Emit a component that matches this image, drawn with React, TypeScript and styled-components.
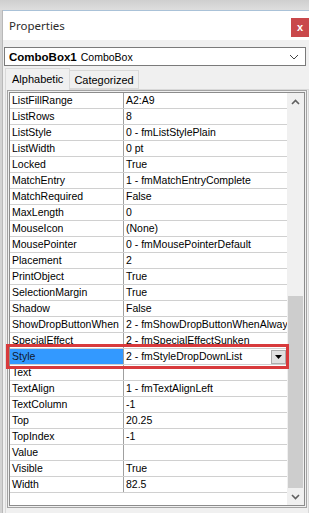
import styled, { createGlobalStyle } from "styled-components";

const GlobalStyle = createGlobalStyle`
  * { box-sizing: border-box; }
  html, body { margin: 0; padding: 0; background: #d8d8d8; }
  body { width: 309px; height: 513px; overflow: hidden; }
`;

type Prop = { name: string; value: string };

const props: Prop[] = [
  { name: "ListFillRange", value: "A2:A9" },
  { name: "ListRows", value: "8" },
  { name: "ListStyle", value: "0 - fmListStylePlain" },
  { name: "ListWidth", value: "0 pt" },
  { name: "Locked", value: "True" },
  { name: "MatchEntry", value: "1 - fmMatchEntryComplete" },
  { name: "MatchRequired", value: "False" },
  { name: "MaxLength", value: "0" },
  { name: "MouseIcon", value: "(None)" },
  { name: "MousePointer", value: "0 - fmMousePointerDefault" },
  { name: "Placement", value: "2" },
  { name: "PrintObject", value: "True" },
  { name: "SelectionMargin", value: "True" },
  { name: "Shadow", value: "False" },
  { name: "ShowDropButtonWhen", value: "2 - fmShowDropButtonWhenAlways" },
  { name: "SpecialEffect", value: "2 - fmSpecialEffectSunken" },
  { name: "Style", value: "2 - fmStyleDropDownList" },
  { name: "Text", value: "" },
  { name: "TextAlign", value: "1 - fmTextAlignLeft" },
  { name: "TextColumn", value: "-1" },
  { name: "Top", value: "20.25" },
  { name: "TopIndex", value: "-1" },
  { name: "Value", value: "" },
  { name: "Visible", value: "True" },
  { name: "Width", value: "82.5" },
];

const Page = styled.div`
  width: 309px;
  height: 513px;
  display: flex;
  flex-direction: column;
  font-family: "Liberation Sans", Arial, sans-serif;
`;

const TopBand = styled.div`
  height: 10px;
  background: linear-gradient(#cfcfcf, #dedede);
`;

const Body = styled.div`
  flex: 1;
  display: flex;
`;

const LeftStrip = styled.div`
  width: 3px;
  background: #d3d3d3;
  border-right: 1px solid #b9b9b9;
`;

const Window = styled.div`
  flex: 1;
  display: flex;
  flex-direction: column;
  background: #f0f0f0;
  border-top: 1px solid #aac2d8;
`;

const TitleBar = styled.div`
  height: 29px;
  background: #ffffff;
  display: flex;
  align-items: flex-start;
  justify-content: space-between;
`;

const Title = styled.span`
  font-family: "Noto Sans", sans-serif;
  font-size: 11.5px;
  color: #2b2b2b;
  margin: 7px 0 0 6px;
`;

const CloseBtn = styled.div`
  width: 18px;
  height: 19px;
  margin-top: 7px;
  background: #c9484b;
  color: #ffffff;
  font-size: 11px;
  font-weight: bold;
  display: flex;
  align-items: center;
  justify-content: center;
  padding-bottom: 2px;
`;

const Panel = styled.div`
  flex: 1;
  display: flex;
  flex-direction: column;
  padding: 7px 0 0 1px;
`;

const ObjectCombo = styled.div`
  width: 302px;
  height: 19px;
  background: #ffffff;
  border: 1px solid #7a7a7a;
  display: flex;
  align-items: center;
  padding: 0 6px 0 4px;
  font-size: 10.5px;
  color: #000;
  gap: 4px;
  b {
    font-size: 11.5px;
  }
`;

const ComboChevron = styled.svg`
  margin-left: auto;
`;

const Tabs = styled.div`
  display: flex;
  align-items: flex-start;
  margin: 2px 0 0 1px;
  height: 21px;
  position: relative;
  z-index: 1;
`;

const Tab = styled.div<{ $active?: boolean }>`
  font-size: 11px;
  color: #000;
  border: 1px solid #d9d9d9;
  border-bottom: ${(p) => (p.$active ? "none" : "1px solid #d9d9d9")};
  background: ${(p) => (p.$active ? "#f0f0f0" : "#f0f0f0")};
  height: ${(p) => (p.$active ? "22px" : "19px")};
  margin-top: ${(p) => (p.$active ? "0" : "2px")};
  margin-left: ${(p) => (p.$active ? "0" : "-1px")};
  padding: ${(p) => (p.$active ? "4px 6px 0 6px" : "3px 4px 0 4px")};
`;

const TabPage = styled.div`
  margin-left: 1px;
  width: 304px;
  border: 1px solid #d9d9d9;
  border-bottom: none;
  padding: 0 1px;
  flex: 1;
`;

const GridFrame = styled.div`
  position: relative;
  height: 418px;
  border: 1px solid #a3a3a3;
  padding: 1px;
  background: #f0f0f0;
`;

const GridInner = styled.div`
  height: 100%;
  border: 1px solid #8c8c8c;
  background: #ffffff;
  display: flex;
`;

const Rows = styled.div`
  flex: 1;
  overflow: hidden;
  font-size: 10.5px;
  color: #000;
`;

const Row = styled.div`
  display: flex;
  height: 16px;
  border-bottom: 1px solid #d0d0d0;
`;

const NameCell = styled.div<{ $selected?: boolean }>`
  width: 114px;
  flex-shrink: 0;
  border-right: 1px solid #a0a0a0;
  padding: 1px 0 0 2px;
  white-space: nowrap;
  overflow: hidden;
  background: ${(p) => (p.$selected ? "#3399ff" : "transparent")};
  color: ${(p) => (p.$selected ? "#10182e" : "#000")};
`;

const ValueCell = styled.div`
  flex: 1;
  display: flex;
  align-items: flex-start;
  padding: 1px 0 0 2px;
  white-space: nowrap;
  overflow: hidden;
`;

const DropBtn = styled.div`
  margin-left: auto;
  margin-right: 1px;
  width: 15px;
  height: 14px;
  flex-shrink: 0;
  background: #e1e1e1;
  border: 1px solid #adadad;
  display: flex;
  align-items: center;
  justify-content: center;
`;

const Scrollbar = styled.div`
  width: 17px;
  flex-shrink: 0;
  background: #f0f0f0;
  display: flex;
  flex-direction: column;
`;

const ArrowBtn = styled.div`
  height: 17px;
  display: flex;
  align-items: center;
  justify-content: center;
`;

const Track = styled.div`
  flex: 1;
  display: flex;
  flex-direction: column;
  justify-content: flex-end;
`;

const Thumb = styled.div`
  margin: 0 1px;
  background: #cdcdcd;
`;

const Highlight = styled.div`
  position: absolute;
  left: -2px;
  top: 253px;
  width: 283px;
  height: 25px;
  border: 3px solid #d83a3c;
  pointer-events: none;
`;

const Chevron = ({ up }: { up?: boolean }) => (
  <svg width="9" height="6" viewBox="0 0 9 6">
    <path
      d={up ? "M1 5 L4.5 1.5 L8 5" : "M1 1 L4.5 4.5 L8 1"}
      fill="none"
      stroke="#606060"
      strokeWidth="1.6"
    />
  </svg>
);

export default function App() {
  return (
    <Page>
      <GlobalStyle />
      <TopBand />
      <Body>
        <LeftStrip />
        <Window>
          <TitleBar>
            <Title>Properties</Title>
            <CloseBtn>x</CloseBtn>
          </TitleBar>
          <Panel>
            <ObjectCombo>
              <b>ComboBox1</b>
              <span>ComboBox</span>
              <ComboChevron width="10" height="6" viewBox="0 0 10 6">
                <path d="M1 1 L5 5 L9 1" fill="none" stroke="#444" strokeWidth="1" />
              </ComboChevron>
            </ObjectCombo>
            <Tabs>
              <Tab $active>Alphabetic</Tab>
              <Tab>Categorized</Tab>
            </Tabs>
            <TabPage>
              <GridFrame>
                <GridInner>
                  <Rows>
                    {props.map((p) => (
                      <Row key={p.name}>
                        <NameCell $selected={p.name === "Style"}>{p.name}</NameCell>
                        <ValueCell>
                          <span>{p.value}</span>
                          {p.name === "Style" && (
                            <DropBtn>
                              <svg width="7" height="4" viewBox="0 0 7 4">
                                <path d="M0 0 H7 L3.5 4 Z" fill="#000" />
                              </svg>
                            </DropBtn>
                          )}
                        </ValueCell>
                      </Row>
                    ))}
                  </Rows>
                  <Scrollbar>
                    <ArrowBtn>
                      <Chevron up />
                    </ArrowBtn>
                    <Track>
                      <Thumb style={{ height: 192 }} />
                    </Track>
                    <ArrowBtn>
                      <Chevron />
                    </ArrowBtn>
                  </Scrollbar>
                </GridInner>
                <Highlight />
              </GridFrame>
            </TabPage>
          </Panel>
        </Window>
      </Body>
    </Page>
  );
}
